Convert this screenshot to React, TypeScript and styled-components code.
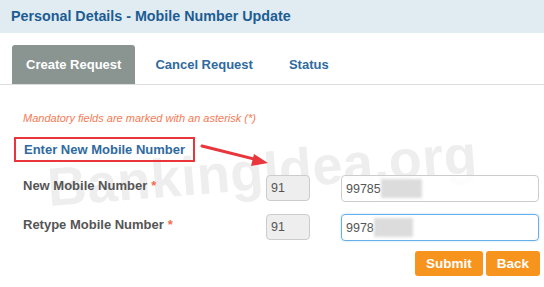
import React from "react";
import styled, { createGlobalStyle } from "styled-components";

const Global = createGlobalStyle`
  html, body { margin: 0; padding: 0; background: #fff; }
  body { font-family: "Liberation Sans", Arial, sans-serif; width: 544px; height: 287px; overflow: hidden; }
`;

const Page = styled.div`
  position: relative;
  width: 544px;
  height: 287px;
  overflow: hidden;
`;

const Header = styled.div`
  height: 33px;
  background: #e0ecf2;
  display: flex;
  align-items: center;
  padding-left: 11px;
  padding-bottom: 1px;
  box-sizing: border-box;
`;

const Title = styled.h1`
  margin: 0;
  font-size: 14.3px;
  font-weight: bold;
  color: #1d5c93;
`;

const TabBar = styled.div`
  display: flex;
  align-items: flex-end;
  margin-top: 12px;
  padding-left: 12px;
  border-bottom: 1px solid #dcdcdc;
  height: 39px;
`;

const Tab = styled.div<{ $active?: boolean }>`
  height: 39px;
  display: flex;
  align-items: center;
  box-sizing: border-box;
  padding: 0 ${(p) => (p.$active ? "14px" : "18px")};
  font-size: 13px;
  font-weight: bold;
  border-radius: 3px 3px 0 0;
  color: ${(p) => (p.$active ? "#fff" : "#2f6aa0")};
  background: ${(p) => (p.$active ? "#8a9591" : "transparent")};
  &:nth-child(2) { padding-left: 20px; }
`;

const Form = styled.div`
  padding: 27px 0 0 23px;
  position: relative;
  z-index: 1;
`;

const Note = styled.div`
  font-size: 11px;
  font-style: italic;
  color: #f47a55;
  height: 13px;
`;

const SectionBox = styled.div`
  display: inline-flex;
  align-items: center;
  margin: 12px 0 0 -9px;
  height: 25px;
  width: 181px;
  box-sizing: border-box;
  border: 2px solid #e8363c;
  padding-left: 8px;
  font-size: 13px;
  font-weight: bold;
  color: #2f6aa0;
`;

const Rows = styled.div`
  display: grid;
  grid-template-columns: 243px 75px 198px;
  row-gap: 12px;
  margin-top: 13px;
`;

const Label = styled.div`
  font-size: 13px;
  font-weight: bold;
  color: #555;
  padding-top: 3px;
`;

const Star = styled.span`
  color: #f26c4f;
  margin-left: 4px;
`;

const CodeBox = styled.div`
  width: 44px;
  height: 26px;
  box-sizing: border-box;
  border: 1px solid #ccc;
  border-radius: 4px;
  background: #eee;
  color: #555;
  font-size: 12.5px;
  display: flex;
  align-items: center;
  padding-left: 4px;
`;

const NumberBox = styled.div<{ $focus?: boolean }>`
  height: 27px;
  box-sizing: border-box;
  border: 1px solid ${(p) => (p.$focus ? "#66afe9" : "#ccc")};
  border-radius: 4px;
  background: rgba(255, 255, 255, 0.85);
  color: #555;
  font-size: 12.5px;
  display: flex;
  align-items: center;
  padding-left: 4px;
  box-shadow: ${(p) => (p.$focus ? "0 0 2px rgba(102,175,233,0.5)" : "none")};
`;

const Blur = styled.span<{ $w: number }>`
  display: inline-block;
  width: ${(p) => p.$w}px;
  height: 19px;
  background: #dcdcdc;
  filter: blur(1.5px);
`;

const Actions = styled.div`
  display: flex;
  justify-content: flex-end;
  gap: 3px;
  padding-right: 4px;
  margin-top: 10px;
`;

const Button = styled.button`
  height: 25px;
  border: none;
  border-radius: 3px;
  background: #f7941d;
  color: #fff;
  font-family: "Liberation Sans", Arial, sans-serif;
  font-size: 13.5px;
  font-weight: bold;
  padding: 0 11px;
`;

const Watermark = styled.div`
  position: absolute;
  left: 50px;
  top: 156px;
  font-size: 54px;
  font-weight: bold;
  color: #eeeeee;
  transform: rotate(-4.5deg);
  transform-origin: left bottom;
  white-space: nowrap;
  z-index: 0;
  letter-spacing: 0.5px;
`;

const Arrow = styled.svg`
  position: absolute;
  left: 198px;
  top: 140px;
  z-index: 2;
`;

export default function App() {
  return (
    <Page>
      <Global />
      <Header>
        <Title>Personal Details - Mobile Number Update</Title>
      </Header>
      <TabBar>
        <Tab $active>Create Request</Tab>
        <Tab>Cancel Request</Tab>
        <Tab>Status</Tab>
      </TabBar>
      <Watermark>BankingIdea.org</Watermark>
      <Form>
        <Note>Mandatory fields are marked with an asterisk (*)</Note>
        <SectionBox>Enter New Mobile Number</SectionBox>
        <Rows>
          <Label>
            New Mobile Number<Star>*</Star>
          </Label>
          <CodeBox>91</CodeBox>
          <NumberBox>
            99785<Blur $w={41} />
          </NumberBox>
          <Label>
            Retype Mobile Number<Star>*</Star>
          </Label>
          <CodeBox>91</CodeBox>
          <NumberBox $focus>
            9978<Blur $w={39} />
          </NumberBox>
        </Rows>
        <Actions>
          <Button>Submit</Button>
          <Button>Back</Button>
        </Actions>
      </Form>
      <Arrow width="80" height="30" viewBox="0 0 80 30">
        <line x1="4" y1="6" x2="60" y2="20" stroke="#e8363c" strokeWidth="3" strokeLinecap="round" />
        <polygon points="70,23 56,14 53,26" fill="#e8363c" />
      </Arrow>
    </Page>
  );
}
